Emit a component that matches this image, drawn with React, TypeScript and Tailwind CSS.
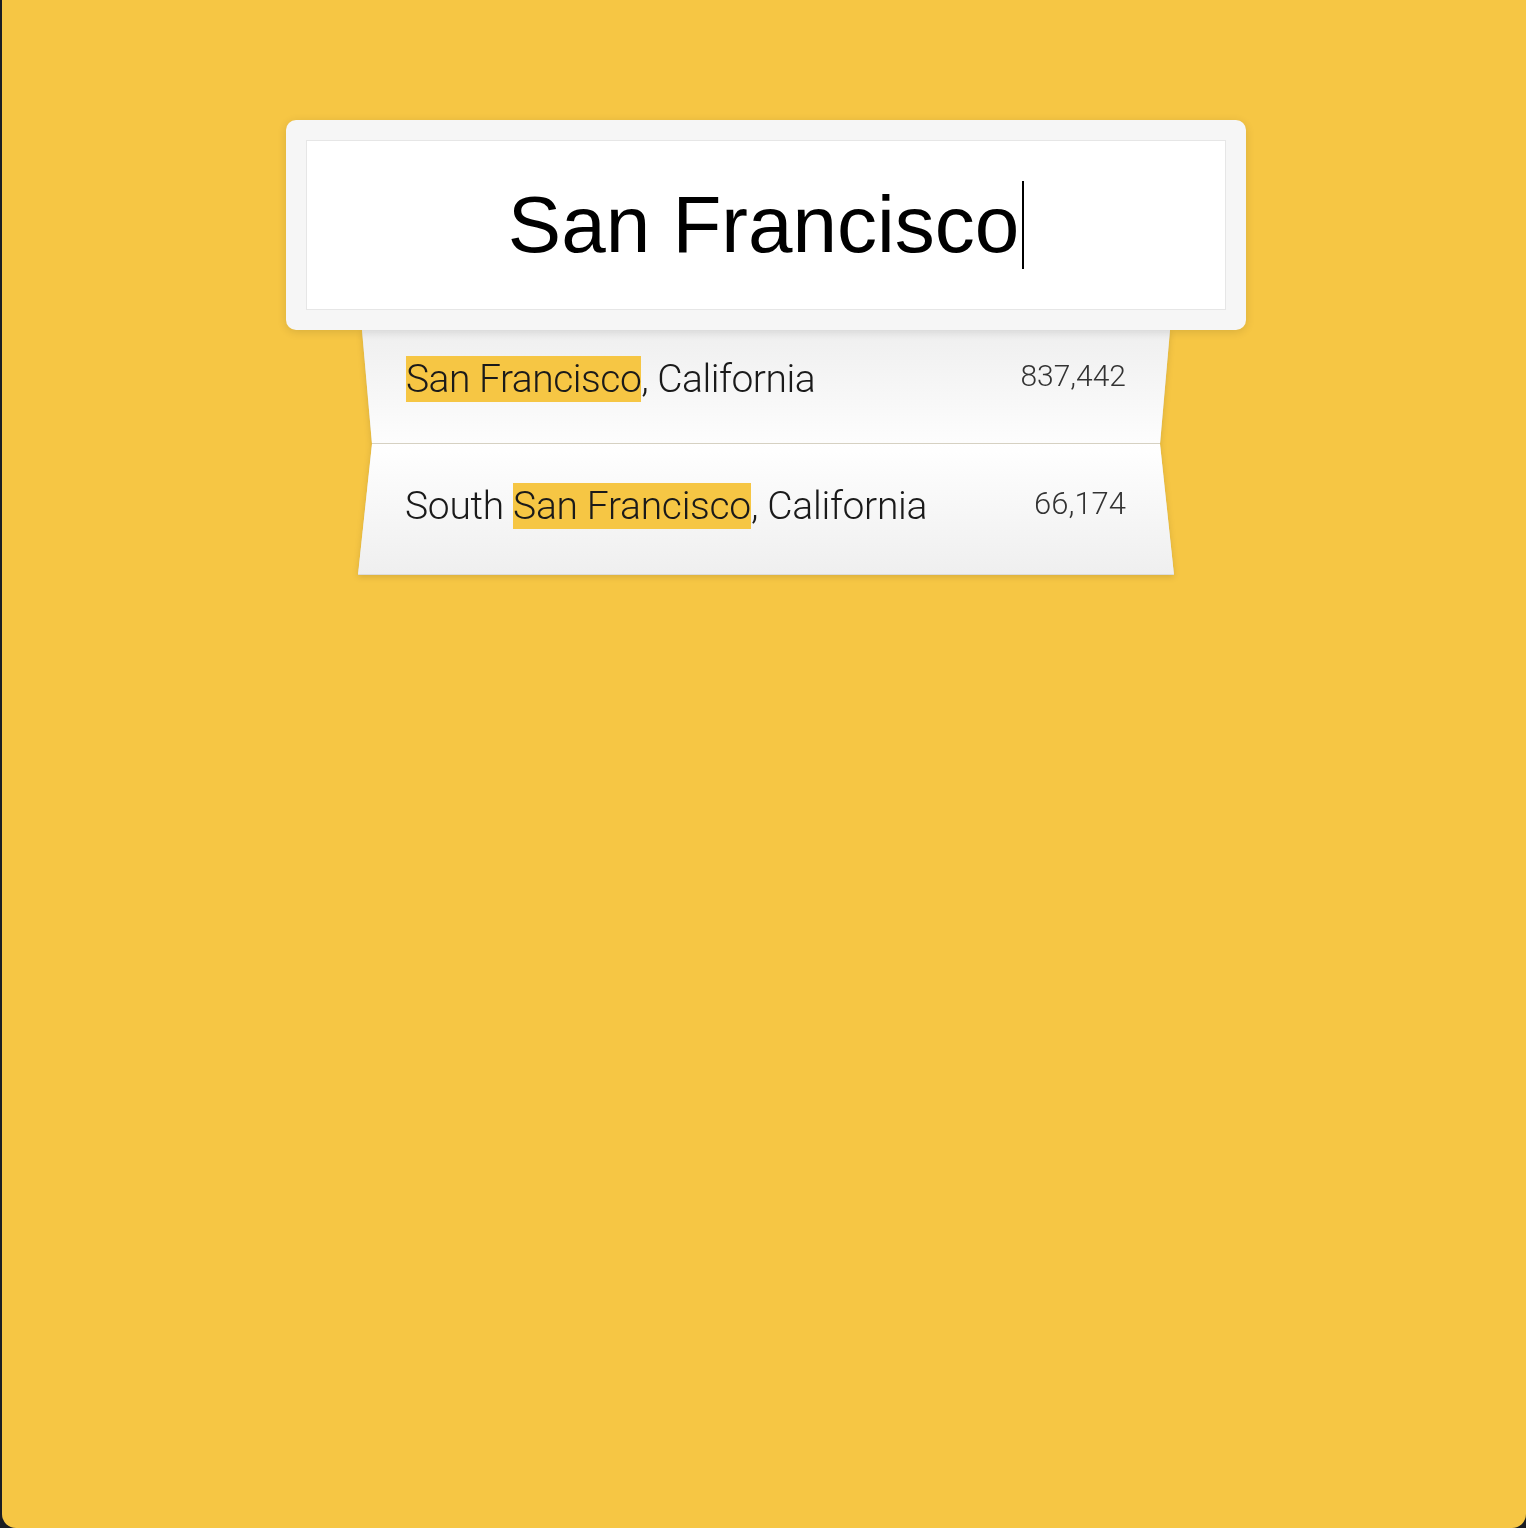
export default function App() {
  return (
    <div className="w-[1526px] h-[1528px] bg-[#1b1d22]">
      <div className="ml-[2px] h-full bg-[#f6c644] rounded-b-[14px] pt-[120px]">
        <div className="ml-[284px] w-[960px]">
          {/* search box */}
          <div className="relative z-10 bg-[#f6f6f6] rounded-[10px] p-[20px] shadow-[0_2px_10px_rgba(0,0,0,0.12)]">
            <div className="h-[170px] bg-white border border-[#e6e6e6] flex items-center justify-center font-['Liberation_Sans',Arial,sans-serif] text-[80px] leading-none text-black">
              <span>San Francisco</span>
              <span className="inline-block w-[2px] h-[88px] bg-black ml-[3px]" />
            </div>
          </div>

          {/* suggestions */}
          <div className="flex flex-col items-center drop-shadow-[0_2px_3px_rgba(0,0,0,0.12)] font-['Roboto',Arial,sans-serif] font-light">
            <div className="w-[808px] h-[114px] bg-[#d6d1c2] [clip-path:polygon(0_0,100%_0,calc(100%-10px)_100%,10px_100%)]">
              <div className="h-[113px] bg-gradient-to-b from-[#efefef] to-[#fdfdfd] flex justify-between pl-[44px] pr-[44px] pt-[26px]">
                <div className="text-[39px] tracking-[-0.5px] leading-[46px] text-[#1a1a1a] whitespace-nowrap">
                  <span className="bg-[#f6c644] inline-block">San Francisco</span>, California
                </div>
                <div className="text-[30px] leading-none text-[#333] mt-[5px]">837,442</div>
              </div>
            </div>
            <div className="w-[816px] h-[131px] bg-[#dcdcdc] [clip-path:polygon(14px_0,calc(100%-14px)_0,100%_100%,0_100%)]">
              <div className="h-[130px] bg-gradient-to-b from-[#ffffff] to-[#efefef] flex justify-between pl-[47px] pr-[48px] pt-[39px]">
                <div className="text-[39px] tracking-[-0.3px] leading-[46px] text-[#1a1a1a] whitespace-nowrap">
                  South <span className="bg-[#f6c644] inline-block">San Francisco</span>, California
                </div>
                <div className="text-[31px] leading-none text-[#333] mt-[5px]">66,174</div>
              </div>
            </div>
          </div>
        </div>
      </div>
    </div>
  );
}
